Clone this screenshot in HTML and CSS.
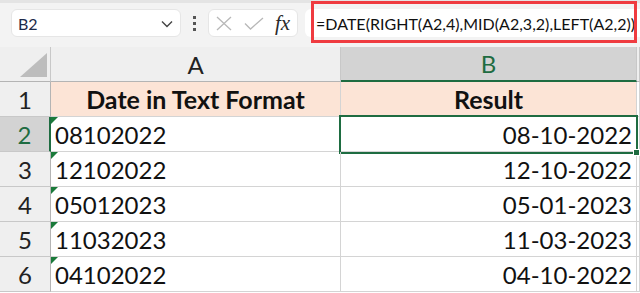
FILE: index.html
```html
<!DOCTYPE html>
<html>
<head>
<meta charset="utf-8">
<link rel="stylesheet" href="styles.css">
</head>
<body>
<div class="toolbar">
  <div class="namebox">
    <span class="name">B2</span>
    <svg class="chev" width="12" height="8" viewBox="0 0 12 8"><path d="M1 1.5 L6 6.5 L11 1.5" fill="none" stroke="#444" stroke-width="1.4"/></svg>
  </div>
  <div class="dots"><i></i><i></i><i></i></div>
  <div class="fxbox">
    <svg width="16" height="15" viewBox="0 0 16 15"><path d="M1 1 L15 14 M15 1 L1 14" stroke="#b8b8b8" stroke-width="1.3" fill="none"/></svg>
    <svg width="20" height="13" viewBox="0 0 20 13"><path d="M1 6.5 L6.5 12 L19 1" stroke="#b8b8b8" stroke-width="1.3" fill="none"/></svg>
    <span class="fx">fx</span>
  </div>
  <div class="formula">
    <span class="ftext">=DATE(RIGHT(A2,4),MID(A2,3,2),LEFT(A2,2))</span>
    <div class="highlight"></div>
  </div>
</div>
<div class="sheet">
  <div class="c corner"><span class="tri"></span></div>
  <div class="c colh">A</div>
  <div class="c colh sel">B</div>
  <div class="c colh"></div>

  <div class="c rowh">1</div>
  <div class="c head">Date in Text Format</div>
  <div class="c head">Result</div>
  <div class="c"></div>

  <div class="c rowh selr">2</div>
  <div class="c txt"><span class="flag"></span>08102022</div>
  <div class="c num active">08-10-2022</div>
  <div class="c"></div>

  <div class="c rowh">3</div>
  <div class="c txt"><span class="flag"></span>12102022</div>
  <div class="c num">12-10-2022</div>
  <div class="c"></div>

  <div class="c rowh">4</div>
  <div class="c txt"><span class="flag"></span>05012023</div>
  <div class="c num">05-01-2023</div>
  <div class="c"></div>

  <div class="c rowh">5</div>
  <div class="c txt"><span class="flag"></span>11032023</div>
  <div class="c num">11-03-2023</div>
  <div class="c"></div>

  <div class="c rowh">6</div>
  <div class="c txt"><span class="flag"></span>04102022</div>
  <div class="c num">04-10-2022</div>
  <div class="c"></div>
</div>
</body>
</html>
```
FILE: styles.css
```css
html, body {
  margin: 0;
  padding: 0;
  width: 640px;
  height: 293px;
  overflow: hidden;
  background: #ffffff;
  font-family: Lato, "Liberation Sans", sans-serif;
  color: #111;
}

.toolbar {
  border-top: 3px solid #e4e4e4;
  background: #f3f3f3;
  display: flex;
  align-items: center;
  padding-left: 11px;
  box-sizing: border-box;
  height: 47px;
  padding-bottom: 4px;
}

.namebox {
  width: 170px;
  height: 28px;
  background: #fff;
  border-radius: 6px;
  box-sizing: border-box;
  border: 1px solid #e6e6e6;
  display: flex;
  align-items: center;
  justify-content: space-between;
  padding: 0 7px 0 6px;
}

.name {
  font-size: 16px;
  color: #1c2a4a;
}

.chev { margin-top: 1px; }

.dots {
  width: 27px;
  display: flex;
  flex-direction: column;
  align-items: center;
  gap: 3px;
}
.dots i {
  display: block;
  width: 3px;
  height: 3px;
  background: #555;
}

.fxbox {
  width: 90px;
  height: 28px;
  background: #fff;
  border-radius: 6px;
  box-sizing: border-box;
  border: 1px solid #e6e6e6;
  display: flex;
  align-items: center;
  gap: 12px;
  padding-left: 7px;
}

.fx {
  font-family: "Liberation Serif", serif;
  font-style: italic;
  font-size: 21px;
  color: #2a2a2a;
  margin-left: -1px;
}

.formula {
  position: relative;
  margin-left: 7px;
  flex: 1;
  height: 28px;
  background: #fff;
  border-radius: 6px 0 0 6px;
  display: flex;
  align-items: center;
  padding-left: 11px;
}

.ftext {
  font-size: 16px;
  letter-spacing: 0.02px;
  color: #111;
  white-space: nowrap;
}

.highlight {
  position: absolute;
  top: -8px;
  bottom: -6px;
  left: 6px;
  right: 3px;
  border: 3px solid #ef3b40;
}

.sheet {
  display: grid;
  grid-template-columns: 51px 290px 296px 3px;
  grid-auto-rows: 35px;
}

.c {
  box-sizing: border-box;
  border-right: 1px solid #d4d4d4;
  border-bottom: 1px solid #d4d4d4;
  font-size: 24px;
  display: flex;
  align-items: center;
  position: relative;
  white-space: nowrap;
}

.corner {
  background: #efefef;
  border-right-color: #c8c8c8;
  border-bottom-color: #b4b4b4;
}
.tri {
  position: absolute;
  right: 3px;
  bottom: 4px;
  width: 0;
  height: 0;
  border-left: 27px solid transparent;
  border-bottom: 24px solid #bdbdbd;
}

.colh {
  background: #efefef;
  justify-content: center;
  color: #222;
  border-right-color: #c8c8c8;
  border-bottom-color: #b4b4b4;
}
.colh.sel {
  background: #d3d3d3;
  color: #1e6c41;
  border-bottom: 2px solid #1e6c41;
}

.rowh {
  background: #efefef;
  justify-content: center;
  color: #222;
  border-right-color: #b4b4b4;
  border-bottom-color: #c8c8c8;
}
.rowh.selr {
  background: #d3d3d3;
  color: #1e6c41;
  border-right: 2px solid #1e6c41;
}

.head {
  background: #fce4d6;
  justify-content: center;
  font-weight: bold;
  font-size: 25px;
}

.txt {
  padding-left: 4px;
}

.flag {
  position: absolute;
  top: 0;
  left: 0;
  width: 0;
  height: 0;
  border-top: 7px solid #1a7a3a;
  border-right: 7px solid transparent;
}

.num {
  justify-content: flex-end;
  padding-right: 4px;
}

.active::after {
  content: "";
  position: absolute;
  top: -2px;
  left: -2px;
  right: -2px;
  bottom: -3px;
  border: 2px solid #1e6c41;
}
.active::before {
  content: "";
  position: absolute;
  right: -4px;
  bottom: -5px;
  width: 5px;
  height: 5px;
  background: #1e6c41;
  border: 1px solid #fff;
  z-index: 2;
}
```
